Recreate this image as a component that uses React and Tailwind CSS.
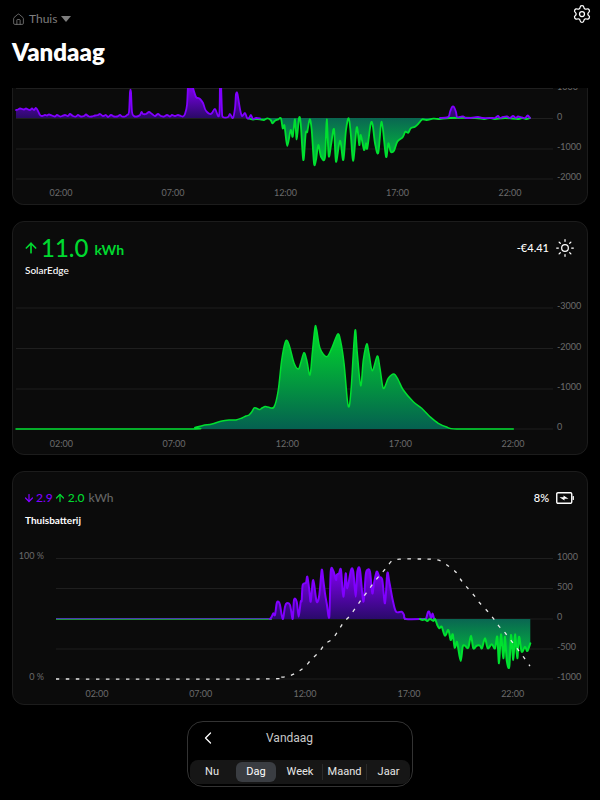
import React from "react";
import { ArrowDown, ArrowUp, ChevronLeft, Home, Settings, Sun } from "lucide-react";

const PURPLE = "#8000ff";
const GREEN = "#00e030";
const GRID = "#1f1f1f";
const LABEL = "#6b6b6b";

// catmull-rom through the points, keeps the peaks of the power lines round
const smooth = (pts) => {
  let d = `M${pts[0][0]} ${pts[0][1]}`;
  for (let i = 0; i < pts.length - 1; i++) {
    const p0 = pts[i - 1] || pts[i];
    const p1 = pts[i];
    const p2 = pts[i + 1];
    const p3 = pts[i + 2] || p2;
    const k = 0.16;
    const c1x = p1[0] + (p2[0] - p0[0]) * k;
    const c1y = p1[1] + (p2[1] - p0[1]) * k;
    const c2x = p2[0] - (p3[0] - p1[0]) * k;
    const c2y = p2[1] - (p3[1] - p1[1]) * k;
    d += `C${c1x.toFixed(1)} ${c1y.toFixed(1)} ${c2x.toFixed(1)} ${c2y.toFixed(1)} ${p2[0]} ${p2[1]}`;
  }
  return d;
};

const area = (pts, base) =>
  `${smooth(pts)}L${pts[pts.length - 1][0]} ${base}L${pts[0][0]} ${base}Z`;

// all chart data is in page coordinates, the viewBox of each svg picks its part
const gridPurple = [
  [16, 110], [18, 109.5], [20, 108.5], [22, 109], [24, 109.5], [26, 108.5], [28, 109.5], [30, 110], [32, 108.5], [34, 110], [36, 108],
  [38, 111], [40, 115], [42, 116], [45, 115], [47, 115.5], [49, 114.5], [52, 115.5], [55, 116.5], [57, 115], [60, 116.5], [62, 116],
  [65, 115], [68, 116], [70, 114], [73, 116], [76, 116.5], [78, 115], [81, 116.5], [84, 116], [86, 114.5], [89, 116.5], [92, 116.5],
  [95, 115.5], [98, 115], [100, 114], [103, 116], [106, 115], [108, 117], [111, 115], [114, 116.5], [117, 116.5], [120, 115], [122, 116.5],
  [125, 116.5], [127, 115], [129, 112], [130, 92], [131, 92], [132, 112], [134, 116], [137, 116.5], [140, 115], [141.5, 112], [143, 114],
  [146, 114], [149, 112], [152, 114], [155, 116], [158, 114], [161, 116], [164, 116.5], [167, 115], [170, 116.5], [172, 115], [175, 116],
  [178, 115], [181, 116], [183, 116.5], [185, 114], [187, 105], [188, 85], [189, 80], [191, 80], [193, 88], [196, 97], [198, 98], [200, 99],
  [203, 103], [205, 109], [207, 112], [210, 114], [212, 113], [215, 109], [218, 116], [219.5, 112], [220, 84], [221, 84], [222, 112], [223, 117],
  [228, 117], [230, 114], [233, 118], [235, 108], [236, 94], [237.5, 94], [240, 109], [242, 116], [245, 113], [247, 118], [249, 118],
  [251, 115], [253, 119], [256, 118], [260, 118.5],
];
const gridPurpleTail = [
  [440, 118], [447, 117.5], [449, 116], [450, 112], [452, 107], [454, 107], [456, 112], [457, 117], [460, 117], [463, 116.5], [466, 118],
  [470, 118], [478, 117], [482, 118], [492, 118], [495, 118], [498, 116], [500, 118], [503, 117], [507, 116.5], [510, 118], [513, 116],
  [516, 118], [518, 116.5], [522, 117.5], [525, 118], [527, 116], [528, 115.5], [530, 118],
];
const gridGreen = [
  [248, 118.5], [253, 119.5], [257, 119], [260, 119.3], [264, 120], [267.3, 118.3], [270.7, 120], [272.3, 123.3], [275, 120.7], [278.3, 119.3],
  [281, 118.3], [282.7, 128.3], [284.3, 125], [285, 129.3], [287.3, 146], [290.7, 130], [292.7, 136.7], [295, 119.3], [296.7, 139.3], [299, 118.3],
  [300.7, 123.3], [303.3, 160], [305.7, 133.3], [307.3, 131.7], [309.7, 119.3], [311.7, 130], [314, 163.3], [316, 160], [318.3, 145], [321, 156.7],
  [325, 157.3], [326.7, 119.3], [328.7, 156], [331.3, 143.3], [334, 129.3], [336, 161.7], [340, 140.7], [343.3, 160], [346, 130], [348.7, 118.3],
  [350.7, 133.3], [353.3, 160.7], [356.7, 127.3], [359.3, 145], [360.7, 135], [364, 150], [366, 143.3], [367.3, 148.3], [370.7, 124], [372.7, 125],
  [375, 143.3], [378.3, 152.7], [381.7, 121.7], [386, 156.7], [388.3, 143.3], [390.7, 151.7], [394, 150.7], [397.3, 141.7], [402.7, 137.3],
  [405.3, 131.7], [408.3, 132.7], [410.7, 128.3], [415, 126.7], [419.3, 122.7], [422.3, 119.3], [426.7, 120], [433.3, 118.7], [440, 119],
  [450, 118], [475, 118], [484, 119], [490, 118], [495, 119], [505, 118], [518, 119], [522, 118], [526, 119], [530, 118],
];

const solar = [
  [16, 429], [186, 429], [195, 427.5], [203, 425.5], [212, 424], [222, 421], [230, 420], [236, 420], [242, 418], [246, 416], [249, 415],
  [252, 411.5], [254, 408], [256, 408], [258, 409], [260, 409.5], [262, 408], [265, 406.5], [268, 407], [274, 407], [278.3, 390], [281.7, 360],
  [285, 343], [287.3, 340.7], [290, 348], [294, 363], [298.3, 369], [300.7, 363], [304, 352.7], [306.7, 360], [310, 375], [312.3, 353], [315, 327.3],
  [316.7, 330], [320, 348.3], [326.7, 356.7], [331.7, 348.3], [337.7, 334], [340.7, 341.7], [344, 363], [347.3, 400], [349.3, 406], [351.3, 386.7],
  [355, 330.7], [357.3, 353.3], [360.7, 385.7], [363.3, 360], [366.7, 344], [369, 353.3], [372.3, 370.7], [377.3, 356], [380, 368.3], [383.3, 388.3],
  [388.3, 378.3], [394, 374], [398.3, 380], [403.3, 390], [413.3, 401.7], [421.7, 408.3], [430, 416.7], [438.3, 423.3], [446.7, 427], [456.7, 429],
  [513.3, 429],
];

const batteryPurple = [
  [270, 619], [271.7, 616.7], [273.3, 613.3], [275, 615], [276.7, 603.3], [278.3, 601.7], [280, 605], [282.7, 619], [285, 606.7], [286.7, 603.3],
  [290, 605], [292.7, 619], [294, 600], [296.7, 601.7], [298.7, 616.7], [300.7, 601.7], [301.7, 600.7], [302.7, 585], [306, 582.7], [307.3, 576.7],
  [309.3, 590], [310.7, 601.7], [312.7, 581.7], [314, 583.3], [316.7, 601.7], [319.3, 595], [321.7, 570], [323.3, 580], [325, 593.3], [326.7, 603.3],
  [329.3, 616.7], [330.7, 571.7], [333.3, 570.7], [336, 580], [336.7, 575], [339, 573.3], [341, 570], [343.3, 596.7], [345.7, 573.3], [347.3, 588.3],
  [351, 570], [353.3, 571.7], [355.7, 596.7], [357.3, 571.7], [360, 570], [363.3, 601.7], [365.7, 575], [367.3, 570], [370, 571.7], [372.3, 593.3],
  [374, 583.3], [376.7, 571.7], [379.3, 576.7], [382.3, 580], [385, 603.3], [387.3, 573.3], [389.3, 581.7], [392.7, 600], [396, 611.7], [401.7, 611.7],
  [404, 615], [406, 619], [424, 619], [426, 619], [428, 612], [429.5, 612.5], [431, 618], [432.5, 613.5], [434, 618.5],
];
const batteryGreen = [
  [420, 619], [422.7, 620], [425, 619.3], [427.3, 621], [430, 619], [433.3, 621], [435, 619], [437.3, 625], [439.3, 628.3], [441.7, 626.7], [445, 635.7],
  [448.3, 630], [450.7, 640], [452.7, 634.3], [454.7, 647.7], [456.7, 641.7], [458, 646.7], [460.7, 661], [462.7, 646.7], [465, 645.7], [468.3, 647.7],
  [471, 635.7], [473.3, 648.3], [476.7, 645.7], [480, 645.7], [482, 648.3], [485, 638.3], [487.7, 648.3], [491.7, 644.3], [495, 648.3], [497.3, 636.7],
  [499, 663.3], [501, 634.3], [503.3, 658.3], [505, 636.7], [506.7, 660], [509.3, 666.7], [511, 635], [513.3, 660], [515, 634.3], [517.3, 658.3],
  [519, 636.7], [521.7, 651.7], [525, 646.7], [527.3, 651], [530.3, 643.3],
];
const soc = [
  [56, 679], [260, 679], [280, 677.3], [290, 675.7], [298, 671.7], [305, 666.7], [311.7, 659], [319, 652.3], [325, 644], [332.3, 639], [338.3, 630.7],
  [343.3, 622.7], [350, 615.7], [356, 607.3], [361.7, 599], [367.3, 591.7], [373.3, 583.3], [380, 575], [386, 568.3], [392.3, 560.7], [401.7, 559],
  [413.3, 559], [423.3, 559], [431.7, 559.3], [440, 560.7], [448.3, 566], [456, 572.3], [461.7, 581], [467.3, 587.7], [474.3, 595.7], [480, 603.3],
  [487.3, 611], [493.3, 618.3], [499.3, 626.7], [506, 634], [523.3, 656.7], [530, 666],
];

const TIMES = ["02:00", "07:00", "12:00", "17:00", "22:00"];

const Axis = ({ x0 = 16, grid, xs, xy }) => (
  <g fontSize={9} fill={LABEL}>
    {grid.map(([y, label]) => (
      <g key={y}>
        <line x1={x0} x2={553} y1={y} y2={y} stroke={GRID} />
        <text x={557} y={y + 1}>{label}</text>
      </g>
    ))}
    {xs.map((x, i) => (
      <text key={x} x={x} y={xy} textAnchor="middle">{TIMES[i]}</text>
    ))}
  </g>
);

const Fade = ({ id, y1, y2, from, to }) => (
  <linearGradient id={id} gradientUnits="userSpaceOnUse" x1="0" x2="0" y1={y1} y2={y2}>
    <stop offset="0" stopColor={from} />
    <stop offset="1" stopColor={to} />
  </linearGradient>
);

const Line = ({ pts, color, width = 2 }) => (
  <path d={smooth(pts)} fill="none" stroke={color} strokeWidth={width} strokeLinejoin="round" strokeLinecap="round" />
);

const Card = ({ children, className = "" }) => (
  <section className={`overflow-hidden border border-[#1c1c1c] bg-[#0b0b0b] ${className}`}>{children}</section>
);

const BatteryIcon = () => (
  <svg viewBox="0 0 18 12" className="h-3 w-5" fill="none">
    <rect x="0.75" y="0.75" width="15" height="10.5" rx="1.2" stroke="white" strokeWidth="1.4" />
    <rect x="16.6" y="4" width="1.3" height="4" rx="0.5" fill="white" />
    <path d="M3.5 5.3H7.5V3.6L12.5 6.7H8.5V8.4Z" fill="white" />
  </svg>
);

const tabs = ["Nu", "Dag", "Week", "Maand", "Jaar"];

export default function App() {
  return (
    <div className="flex h-screen w-full flex-col overflow-hidden bg-black font-['Lato',sans-serif] text-white">
      <header className="flex h-22 shrink-0 items-start justify-between pl-3 pr-2">
        <div className="pt-3">
          <div className="flex h-3.5 items-center gap-1 text-xs text-[#7d7d7d]">
            <Home size={13} strokeWidth={1.5} />
            <span>Thuis</span>
            <svg viewBox="0 0 10 6" className="h-2 w-2.5 fill-[#7d7d7d]">
              <path d="M0 0H10L5 6Z" />
            </svg>
          </div>
          <h1 className="mt-2.5 text-2xl leading-8 font-extrabold">Vandaag</h1>
        </div>
        <Settings size={20} strokeWidth={1.5} className="mt-1" />
      </header>

      <main className="flex flex-col gap-4 px-3">
        <Card className="rounded-b-xl border-t-0">
          <svg viewBox="13 88 574 116" className="block w-full">
            <defs>
              <Fade id="g1" y1={118} y2={162} from="#0a6652" to="#00c83a" />
              <Fade id="p1" y1={88} y2={118} from="#7a00e8" to="#2a0a66" />
            </defs>
            <Axis
              grid={[[88.5, "1000"], [118.5, "0"], [149, "-1000"], [179, "-2000"]]}
              xs={[61, 173, 285.5, 397.5, 510]}
              xy={196}
            />
            <path d={area(gridPurple, 118)} fill="url(#p1)" />
            <path d={area(gridPurpleTail, 118)} fill="url(#p1)" />
            <path d={area(gridGreen, 118)} fill="url(#g1)" />
            <Line pts={gridGreen} color={GREEN} width={1.8} />
            <Line pts={gridPurple} color={PURPLE} width={1.8} />
            <Line pts={gridPurpleTail} color={PURPLE} width={1.8} />
          </svg>
        </Card>

        <Card className="rounded-xl">
          <div className="flex h-17 items-start justify-between px-3 pt-3">
            <div>
              <div className="flex items-center text-[#00d92f]">
                <ArrowUp size={16} strokeWidth={2.5} className="-ml-0.5" />
                <span className="ml-0.5 text-2xl leading-7 font-medium">11.0</span>
                <span className="ml-1.5 mt-1 text-sm font-bold">kWh</span>
              </div>
              <p className="mt-0.5 text-[10px] leading-3 font-medium">SolarEdge</p>
            </div>
            <div className="flex items-center gap-1.5 pt-1">
              <span className="text-[11px] font-medium">-€4.41</span>
              <Sun size={20} strokeWidth={1.5} />
            </div>
          </div>
          <svg viewBox="13 290 574 164" className="block w-full">
            <defs>
              <Fade id="g2" y1={326} y2={429} from="#00dc2a" to="#056050" />
            </defs>
            <Axis
              grid={[[308, "-3000"], [348.5, "-2000"], [389, "-1000"], [429, "0"]]}
              xs={[61.3, 174, 287.3, 400.3, 513]}
              xy={446.5}
            />
            <path d={area(solar, 429)} fill="url(#g2)" />
            <Line pts={solar} color={GREEN} width={1.5} />
          </svg>
        </Card>

        <Card className="rounded-xl">
          <div className="flex h-17 items-start justify-between px-3 pt-3">
            <div>
              <div className="flex h-7 items-center text-xs font-medium">
                <ArrowDown size={12} strokeWidth={2.5} className="-ml-0.5 text-[#8000ff]" />
                <span className="ml-px text-[#8000ff]">2.9</span>
                <ArrowUp size={12} strokeWidth={2.5} className="ml-px text-[#00d92f]" />
                <span className="ml-0.5 text-[#00d92f]">2.0</span>
                <span className="ml-1 text-[#666666]">kWh</span>
              </div>
              <p className="mt-0.5 text-[10px] leading-3 font-bold">Thuisbatterij</p>
            </div>
            <div className="flex h-7 items-center gap-1.5">
              <span className="text-[11px] font-medium">8%</span>
              <BatteryIcon />
            </div>
          </div>
          <svg viewBox="13 540 574 164" className="block w-full">
            <defs>
              <Fade id="g3" y1={619} y2={665} from="#0a6652" to="#00cc38" />
              <Fade id="p3" y1={570} y2={619} from="#8000f0" to="#2a0a6a" />
            </defs>
            <Axis
              x0={56}
              grid={[[558.5, "1000"], [588.5, "500"], [619, "0"], [649, "-500"], [679, "-1000"]]}
              xs={[97, 200.7, 305, 409, 512.7]}
              xy={696.5}
            />
            <g fontSize={9} fill={LABEL} textAnchor="end">
              <text x={44} y={559}>100 %</text>
              <text x={44} y={680}>0 %</text>
            </g>
            <path d={area(batteryPurple, 619)} fill="url(#p3)" />
            <path d={area(batteryGreen, 619)} fill="url(#g3)" />
            <line x1={56} x2={270} y1={618.5} y2={618.5} stroke="#4a3ab0" />
            <line x1={56} x2={272} y1={619.5} y2={619.5} stroke="#1f8f3f" />
            <line x1={404} x2={422} y1={619.5} y2={619.5} stroke="#1f8f3f" />
            <Line pts={batteryPurple} color={PURPLE} />
            <Line pts={batteryGreen} color={GREEN} />
            <path d={smooth(soc)} fill="none" stroke="#e8e8e8" strokeWidth={1.3} strokeDasharray="3.5 6.5" />
          </svg>
        </Card>

        <nav className="self-center rounded-2xl border border-[#333333] bg-black px-0.5 pb-0.5 font-['Roboto',sans-serif]">
          <div className="flex h-9.5 items-center gap-12 pb-1.5 pl-2 text-xs text-[#c8c8c8]">
            <ChevronLeft size={20} strokeWidth={1.5} className="text-white" />
            <span>Vandaag</span>
          </div>
          <div className="grid w-55 grid-cols-5 items-center rounded-lg bg-[#161616] py-0.5 text-[11px] leading-5 text-center text-[#e6e6e6]">
            {tabs.map((t, i) => (
              <span
                key={t}
                className={`${t === "Dag" ? "rounded-md bg-[#3a3d42] mx-0.5 text-white" : ""} ${i > 2 ? "border-l border-[#2a2a2a] leading-4" : ""}`}
              >
                {t}
              </span>
            ))}
          </div>
        </nav>
      </main>
    </div>
  );
}
